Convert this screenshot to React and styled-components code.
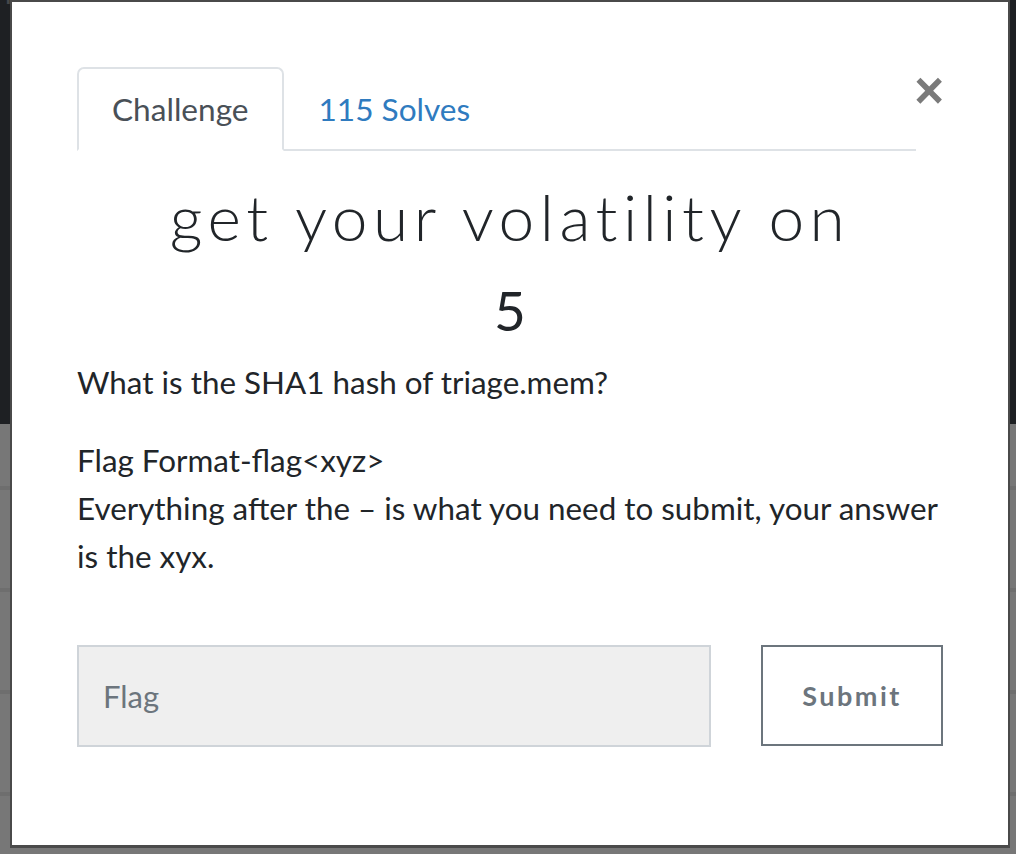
import React from "react";
import styled, {createGlobalStyle} from "styled-components";

const GlobalStyle = createGlobalStyle`
  html, body {
    margin: 0;
    padding: 0;
    height: 100%;
    background: #eeeeee;
    font-family: Lato, "Open Sans", sans-serif;
    overflow: hidden;
  }
  #root {
    height: 100%;
  }
`

const Page = styled.div`
  position: relative;
  height: 100vh;
  overflow: hidden;
`

const Jumbotron = styled.div`
  height: 424px;
  background: #3d4046;
  overflow: hidden;
`

const NavLinks = styled.div`
  display: flex;
  gap: 70px;
  margin-top: -24px;
  font-size: 28px;
  color: #8a9096;
  white-space: nowrap;
`

const Row = styled.div`
  height: ${p => (p.$first ? "62px" : "98px")};
  border-bottom: 4px solid #dcdcdc;
`

const Backdrop = styled.div`
  position: absolute;
  inset: 0;
  background: rgba(0, 0, 0, 0.5);
`

const Modal = styled.div`
  position: absolute;
  left: 10px;
  top: 0;
  width: 1000px;
  height: 848px;
  box-sizing: border-box;
  background: #fff;
  border: 2px solid #4a4a4a;
  border-bottom-width: 3px;
  padding: 65px 65px 0 65px;
  color: #212529;
`

const Close = styled.button`
  position: absolute;
  top: 63px;
  right: 64px;
  border: none;
  background: none;
  padding: 0;
  font-family: "Liberation Sans", Arial, sans-serif;
  font-size: 51px;
  font-weight: bold;
  line-height: 1;
  color: #7a7a7a;
  cursor: pointer;
`

const Tabs = styled.div`
  display: flex;
  width: 839px;
  border-bottom: 2px solid #dee2e6;
`

const Tab = styled.div`
  padding: 0 33px;
  height: 80px;
  display: flex;
  align-items: center;
  font-size: 31.6px;
  margin-bottom: -2px;
  border: 2px solid ${p => (p.$active ? "#dee2e6" : "transparent")};
  border-bottom-color: ${p => (p.$active ? "#fff" : "transparent")};
  border-radius: 7px 7px 0 0;
  color: ${p => (p.$active ? "#495057" : "#2f7bbf")};
  background: ${p => (p.$active ? "#fff" : "transparent")};
`

const Title = styled.h2`
  margin: 28px 0 0;
  text-align: center;
  font-family: Lato, sans-serif;
  font-weight: 300;
  font-size: 64px;
  letter-spacing: 5.5px;
  line-height: 1.2;
`

const Value = styled.h3`
  margin: 21px 0 0;
  text-align: center;
  font-weight: 400;
  font-size: 55px;
  line-height: 1.2;
`

const Description = styled.div`
  margin-top: 15px;
  font-size: 31.4px;
  line-height: 48px;

  p {
    margin: 0 0 30px;
  }
`

const SubmitRow = styled.div`
  display: flex;
  align-items: flex-start;
  gap: 50px;
  margin-top: 65px;
`

const FlagInput = styled.input`
  width: 634px;
  height: 102px;
  box-sizing: border-box;
  background: #efefef;
  border: 2px solid #cfd4d9;
  padding: 0 24px;
  font-family: Lato, sans-serif;
  font-size: 31px;
  color: #495057;
  outline: none;

  &::placeholder {
    color: #6c757d;
  }
`

const SubmitButton = styled.button`
  width: 182px;
  height: 101px;
  box-sizing: border-box;
  background: #fff;
  border: 2px solid #6c757d;
  font-family: Lato, sans-serif;
  font-weight: bold;
  font-size: 27px;
  letter-spacing: 2.5px;
  color: #6c757d;
  cursor: pointer;
`

const App = () => {
    return (
        <Page>
            <GlobalStyle/>
            <Jumbotron>
                <NavLinks>
                    <span>Tutor</span>
                    <span>Users</span>
                    <span>Teams</span>
                    <span>Scoreboard</span>
                    <span>Challenges</span>
                </NavLinks>
            </Jumbotron>
            <Row $first/>
            <Row/>
            <Row/>
            <Row/>
            <Backdrop/>
            <Modal>
                <Close aria-label="Close">×</Close>
                <Tabs>
                    <Tab $active>Challenge</Tab>
                    <Tab>115 Solves</Tab>
                </Tabs>
                <Title>get your volatility on</Title>
                <Value>5</Value>
                <Description>
                    <p>What is the SHA1 hash of triage.mem?</p>
                    <p>
                        Flag Format-flag&lt;xyz&gt;<br/>
                        Everything after the – is what you need to submit, your answer is the xyx.
                    </p>
                </Description>
                <SubmitRow>
                    <FlagInput placeholder="Flag"/>
                    <SubmitButton>Submit</SubmitButton>
                </SubmitRow>
            </Modal>
        </Page>
    )
}

export default App
